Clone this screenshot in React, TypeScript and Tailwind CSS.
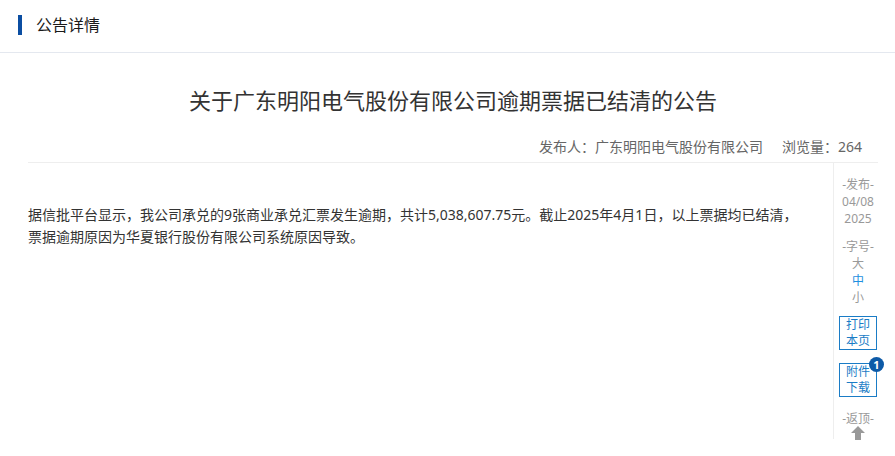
import React from "react";

const font = { fontFamily: '"Noto Sans", "Noto Sans CJK SC", sans-serif' };

const Notice: React.FC = () => {
  return (
    <div className="w-[895px] h-[456px] bg-white overflow-hidden" style={font}>
      {/* Header */}
      <div className="h-[53px] border-b border-[#e4e8ef] flex items-center pl-[18px] pb-[2px]">
        <span className="w-[4px] h-[20px] bg-[#0b4ea2]" />
        <span className="ml-[14px] text-[16px] leading-5 text-[#1a1a1a]">公告详情</span>
      </div>

      <div className="ml-[28px] mr-[17px]">
        {/* Title */}
        <h1 className="mt-[32px] text-center text-[22px] leading-[30px] text-[#333]">
          关于广东明阳电气股份有限公司逾期票据已结清的公告
        </h1>
        {/* Meta */}
        <div className="mt-[22px] pb-[5px] pr-[16px] flex justify-end gap-[19px] text-[14px] leading-5 text-[#666] border-b border-[#eeeeee]">
          <span>发布人：广东明阳电气股份有限公司</span>
          <span>浏览量：264</span>
        </div>

        {/* Body */}
        <div className="flex">
          <div className="flex-1 pt-[41px] text-[14px] leading-[22px] text-[#333]">
            据信批平台显示，我公司承兑的9张商业承兑汇票发生逾期，共计5,038,607.75元。截止2025年4月1日，以上票据均已结清，
            <br />
            票据逾期原因为华夏银行股份有限公司系统原因导致。
          </div>

          {/* Side tools */}
          <div className="w-[45px] h-[276px] border-l border-[#eeeeee] pl-[5px]">
            <div className="w-[38px] flex flex-col items-center text-[12px] leading-[17px] text-[#999] pt-[13px]">
              <span>-发布-</span>
              <span>04/08</span>
              <span>2025</span>
              <span className="mt-[11px]">-字号-</span>
              <span>大</span>
              <span className="text-[#1e8fe0]">中</span>
              <span>小</span>
              <div className="mt-[10px] w-[38px] h-[34px] border border-[#1a7cc6] flex flex-col items-center justify-center text-[#1a7cc6] leading-4">
                <span>打印</span>
                <span>本页</span>
              </div>
              <div className="relative mt-[13px] w-[38px] h-[34px] border border-[#1a7cc6] flex flex-col items-center justify-center text-[#1a7cc6] leading-4">
                <span>附件</span>
                <span>下载</span>
                <span className="absolute -top-[7px] -right-[8px] w-[15px] h-[15px] rounded-full bg-[#0d5aa7] text-white text-[11px] font-bold leading-[15px] text-center">
                  1
                </span>
              </div>
              <span className="mt-[13px]">-返顶-</span>
              <svg className="w-[14px] h-[14px] mt-[-1px]" viewBox="0 0 14 14">
                <polygon points="7,0 14,7 10,7 10,14 4,14 4,7 0,7" fill="#999" />
              </svg>
            </div>
          </div>
        </div>
      </div>
    </div>
  );
};

export default Notice;
